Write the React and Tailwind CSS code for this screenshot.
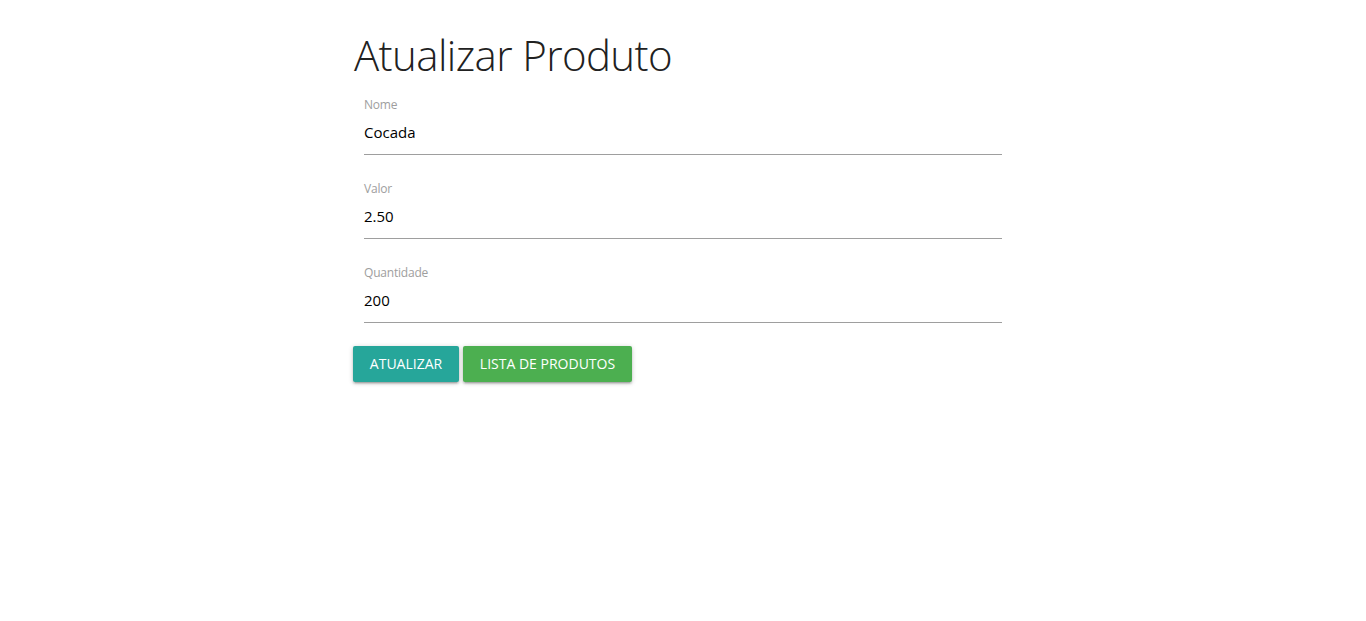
import React from "react";

const fields = [
  { label: "Nome", value: "Cocada" },
  { label: "Valor", value: "2.50" },
  { label: "Quantidade", value: "200" },
];

const shadow =
  "shadow-[0_2px_2px_0_rgba(0,0,0,0.14),0_3px_1px_-2px_rgba(0,0,0,0.12),0_1px_5px_0_rgba(0,0,0,0.2)]";

export default function App() {
  return (
    <div className="min-h-screen bg-white" style={{ fontFamily: '"Open Sans", "Noto Sans", sans-serif' }}>
      <div className="ml-[353px] w-[660px]">
        <h1 className="pt-[27px] h-[84px] text-[42px] leading-[56px] font-light tracking-[-0.6px] text-[#212121] pl-[1px]">
          Atualizar Produto
        </h1>
        <div className="pl-[11px] pr-[11px] pt-[13px]">
          {fields.map((f) => (
            <div key={f.label} className="mb-[26px]">
              <div className="text-[12px] leading-[16px] text-[#9e9e9e] tracking-[-0.2px]">{f.label}</div>
              <div className="h-[42px] border-b border-[#9e9e9e] flex items-center text-[15px] text-black pb-[2px]">
                {f.value}
              </div>
            </div>
          ))}
        </div>
        <div className="flex gap-[4px] -mt-[3px]">
          <button className={`h-[36px] w-[106px] rounded-[2px] bg-[#26a69a] text-white text-[14px] leading-[34px] pb-[1px] uppercase ${shadow}`}>
            Atualizar
          </button>
          <button className={`h-[36px] w-[169px] rounded-[2px] bg-[#4caf50] text-white text-[14px] leading-[34px] pb-[1px] uppercase ${shadow}`}>
            Lista de Produtos
          </button>
        </div>
      </div>
    </div>
  );
}
